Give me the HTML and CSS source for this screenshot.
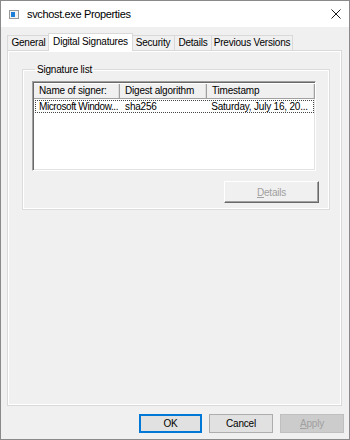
FILE: index.html
```html
<!DOCTYPE html>
<html lang="en">
<head>
  <meta charset="UTF-8">
  <title>svchost.exe Properties</title>
  <link rel="stylesheet" href="styles.css">
</head>
<body>
  <div class="window">
    <div class="titlebar">
      <svg class="app-icon" width="10" height="9" viewBox="0 0 10 9">
        <rect x="0.5" y="0.5" width="9" height="8" fill="#f4f4f4" stroke="#9a9a9a"/>
        <rect x="2" y="2" width="4" height="5" fill="#1e7fd9"/>
      </svg>
      <span class="title">svchost.exe Properties</span>
      <svg class="close" width="10" height="10" viewBox="0 0 10 10">
        <path d="M0.5 0.5 L9.5 9.5 M9.5 0.5 L0.5 9.5" stroke="#1a1a1a" stroke-width="1"/>
      </svg>
    </div>

    <div class="tabs">
      <div class="tab t-general">General</div>
      <div class="tab t-sig active">Digital Signatures</div>
      <div class="tab t-sec">Security</div>
      <div class="tab t-det">Details</div>
      <div class="tab t-prev">Previous Versions</div>
    </div>

    <div class="panel">
      <fieldset class="group">
        <legend>Signature list</legend>
        <div class="listview">
          <div class="lv-header">
            <div class="col c1">Name of signer:</div>
            <div class="col c2">Digest algorithm</div>
            <div class="col c3">Timestamp</div>
          </div>
          <div class="lv-row">
            <div class="col c1">Microsoft Window...</div>
            <div class="col c2">sha256</div>
            <div class="col c3">Saturday, July 16, 20...</div>
          </div>
        </div>
        <div class="group-actions">
          <button class="classic-btn" disabled><u>D</u>etails</button>
        </div>
      </fieldset>
    </div>

    <div class="footer">
      <button class="btn default">OK</button>
      <button class="btn">Cancel</button>
      <button class="btn" disabled><u>A</u>pply</button>
    </div>
  </div>
</body>
</html>
```

FILE: styles.css
```css
body {
  margin: 0;
  font-family: 'Liberation Sans', Arial, sans-serif;
  font-size: 10px;
  letter-spacing: -0.2px;
  color: #000;
  background: #fff;
}
.window {
  width: 350px;
  height: 440px;
  box-sizing: border-box;
  border: 1px solid #8a8a8a;
  background: #f0f0f0;
  display: flex;
  flex-direction: column;
}
.titlebar {
  height: 26px;
  background: #fff;
  display: flex;
  align-items: center;
  padding: 0 8px 0 8px;
}
.app-icon {
  margin-right: 8px;
}
.title {
  font-size: 11px;
  letter-spacing: -0.35px;
  flex: 1;
}

.tabs {
  display: flex;
  align-items: flex-end;
  margin: 6px 0 0 6px;
  height: 17px;
  position: relative;
  z-index: 1;
}
.tab {
  box-sizing: border-box;
  height: 15px;
  line-height: 14px;
  text-align: center;
  white-space: nowrap;
  border: 1px solid #d9d9d9;
  border-bottom: none;
  margin-left: -1px;
  background: #f0f0f0;
}
.t-general { width: 43px; margin-left: 0; }
.t-sig { width: 85px; }
.t-sec { width: 44px; }
.t-det { width: 38px; }
.t-prev { width: 82px; }
.tab.active {
  height: 18px;
  line-height: 16px;
  margin-bottom: -1px;
  margin-right: -1px;
  margin-left: -2px;
  background: #fff;
  position: relative;
}

.panel {
  margin-left: 6px;
  width: 335px;
  height: 356px;
  box-sizing: border-box;
  border: 1px solid #d9d9d9;
  box-shadow: inset 0 0 0 1px #fff;
  padding: 13px 12px 0 14px;
}

.group {
  margin: 0;
  width: 308px;
  height: 146px;
  box-sizing: border-box;
  border: 1px solid #dcdcdc;
  box-shadow: inset 0 0 0 1px #fff;
  padding: 6px 12px 0 9px;
}
.group legend {
  padding: 0 2px;
  margin-left: 3px;
}

.listview {
  width: 284px;
  height: 90px;
  box-sizing: border-box;
  background: #fff;
  border: 1px solid;
  border-color: #a0a0a0 #fff #fff #a0a0a0;
  box-shadow: inset 1px 1px 0 #696969, inset -1px -1px 0 #e3e3e3;
  padding: 1px 0 0 1px;
}
.lv-header {
  display: flex;
  height: 14px;
  width: 281px;
  background: #f0f0f0;
  border-bottom: 1px solid #a0a0a0;
  border-top: 1px solid #fff;
}
.lv-header .col {
  border-right: 1px solid #a0a0a0;
  box-shadow: inset -1px 0 0 #dcdcdc;
  line-height: 14px;
}
.col {
  box-sizing: border-box;
  padding-left: 5px;
  white-space: nowrap;
  overflow: hidden;
}
.c1 { width: 86px; }
.c2 { width: 87px; }
.c3 { width: 108px; }
.lv-row {
  display: flex;
  margin: 1px 1px 0 1px;
  width: 279px;
  height: 13px;
  box-sizing: border-box;
  border: 1px dotted #444;
  line-height: 11px;
}
.lv-row .c1 {
  width: 85px;
  padding-left: 3px;
  letter-spacing: -0.4px;
}

.group-actions {
  display: flex;
  justify-content: flex-end;
  margin-top: 10px;
  margin-right: -2px;
}
.classic-btn {
  width: 95px;
  height: 22px;
  font-family: inherit;
  font-size: 10px;
  letter-spacing: -0.2px;
  color: #a0a0a0;
  background: #f0f0f0;
  border: 1px solid;
  border-color: #fff #696969 #696969 #fff;
  box-shadow: inset -1px -1px 0 #a0a0a0;
  padding: 0;
}

.footer {
  display: flex;
  justify-content: flex-end;
  gap: 7px;
  margin-top: 8px;
  padding-right: 5px;
}
.btn {
  width: 64px;
  height: 19px;
  box-sizing: border-box;
  font-family: inherit;
  font-size: 10px;
  letter-spacing: -0.2px;
  background: #e1e1e1;
  border: 1px solid #adadad;
  color: #000;
  padding: 0;
}
.btn.default {
  width: 63px;
  border: 2px solid #0078d7;
}
.btn:disabled {
  background: #cccccc;
  border-color: #bfbfbf;
  color: #a0a0a0;
}
```
